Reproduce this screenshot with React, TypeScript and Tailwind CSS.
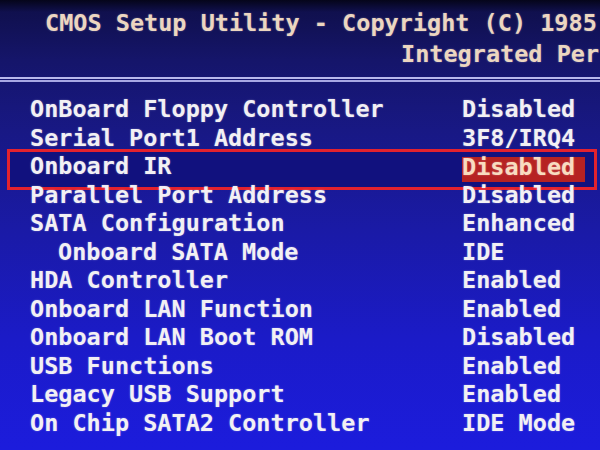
import React from "react";

const rows: { label: string; value: string; indent?: boolean; selected?: boolean }[] = [
  { label: "OnBoard Floppy Controller", value: "Disabled" },
  { label: "Serial Port1 Address", value: "3F8/IRQ4" },
  { label: "Onboard IR", value: "Disabled", selected: true },
  { label: "Parallel Port Address", value: "Disabled" },
  { label: "SATA Configuration", value: "Enhanced" },
  { label: "Onboard SATA Mode", value: "IDE", indent: true },
  { label: "HDA Controller", value: "Enabled" },
  { label: "Onboard LAN Function", value: "Enabled" },
  { label: "Onboard LAN Boot ROM", value: "Disabled" },
  { label: "USB Functions", value: "Enabled" },
  { label: "Legacy USB Support", value: "Enabled" },
  { label: "On Chip SATA2 Controller", value: "IDE Mode" },
];

export default function App() {
  return (
    <div
      className="w-[600px] h-[450px] overflow-hidden relative flex flex-col font-bold text-[23.5px] whitespace-nowrap [text-shadow:0_0_2px_rgba(255,255,255,0.35)]"
      style={{
        fontFamily: '"DejaVu Sans Mono", "Liberation Mono", monospace',
        background:
          "linear-gradient(180deg, #05051a 0px, #10104e 12px, #15156a 60px, #181884 130px, #1a1aa6 230px, #1b1bc8 340px, #1c1cdc 450px)",
      }}
    >
      <div className="pt-[8px] text-[#ecd6c0] leading-[31px]">
        <div className="pl-[45px]">CMOS Setup Utility - Copyright (C) 1985</div>
        <div className="pl-[401px]">Integrated Per</div>
      </div>
      <div className="mt-[7px] flex flex-col gap-[1px]">
        <div className="h-[2px] bg-[#b8b8ec]" />
        <div className="h-[2px] bg-[#a8a8e4]" />
      </div>
      <div className="mt-[13px] flex flex-col text-[#f2f0f4] leading-[28.5px]">
        {rows.map((r) => (
          <div key={r.label} className="relative flex h-[28.5px]">
            {r.selected && (
              <div className="absolute left-[7px] right-[3px] top-[-3px] bottom-[-9px] border-[3px] border-[#e3222e] bg-[#11117e]" />
            )}
            <div className={`relative w-[462px] ${r.indent ? "pl-[58px]" : "pl-[30px]"}`}>{r.label}</div>
            <div
              className={`relative ${r.selected ? "bg-[#b62222] text-[#f8dcc0] w-[123px] mt-[5px] h-[25px] leading-[20px]" : ""}`}
            >
              {r.value}
            </div>
          </div>
        ))}
      </div>
    </div>
  );
}
